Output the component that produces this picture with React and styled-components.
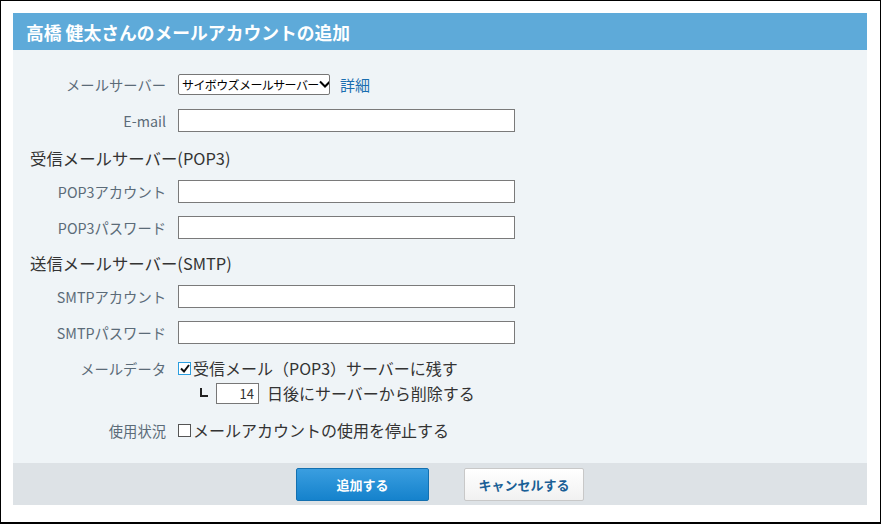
import React from "react";
import styled, { createGlobalStyle } from "styled-components";

const G = createGlobalStyle`
  html,body{margin:0;padding:0;background:#fff;}
  body{font-family:"Noto Sans CJK JP","Noto Sans",sans-serif;}
`;
const Frame = styled.div`
  width:881px;height:524px;box-sizing:border-box;border:1px solid #000;border-bottom-width:2px;
  padding:12px 13px 0 12px;background:#fff;
`;
const Header = styled.div`
  height:37px;background:#5eaad9;color:#fff;font-weight:bold;font-size:17.8px;
  display:flex;align-items:center;padding-left:13px;white-space:nowrap;
`;
const Body = styled.div`
  background:#eff4f7;height:413px;box-sizing:border-box;padding-top:23px;
  display:flex;flex-direction:column;
`;
const Row = styled.div`
  display:flex;align-items:${p=>p.top?"flex-start":"center"};min-height:22px;margin-bottom:${p=>p.mb||13}px;
`;
const Label = styled.div`
  width:153px;text-align:right;color:#5b6b78;font-size:14.3px;padding-right:12px;flex:none;white-space:nowrap;
`;
const Section = styled.div`
  font-size:16.4px;color:#333;padding-left:17px;margin:-2px 0 10px;
`;
const Input = styled.div`
  width:337px;height:23px;box-sizing:border-box;border:1px solid #7a7a7a;background:#fff;
`;
const Select = styled.div`
  width:152px;height:21px;box-sizing:border-box;border:1px solid #767676;background:#fff;border-radius:2px;
  display:flex;align-items:center;justify-content:space-between;padding:0 3px;font-size:12px;color:#000;
  white-space:nowrap;letter-spacing:-0.6px;overflow:hidden;
`;
const Link = styled.span`color:#1a6eb0;font-size:15px;margin-left:10px;`;
const Check = styled.span`
  width:11px;height:11px;border:1px solid ${p=>p.on?"#2a9ee0":"#555"};background:#fff;display:inline-flex;
  align-items:center;justify-content:center;margin-right:2px;flex:none;
`;
const Opt = styled.div`display:flex;align-items:center;font-size:16px;color:#333;white-space:nowrap;`;
const Num = styled.div`
  width:43px;height:21px;box-sizing:border-box;border:1px solid #777;background:#fff;font-size:13px;
  text-align:right;padding-right:4px;line-height:19px;margin:0 8px 0 7px;color:#333;
`;
const Sub = styled.div`display:flex;align-items:center;padding-left:22px;margin-top:1px;font-size:16px;color:#333;white-space:nowrap;`;
const Footer = styled.div`
  height:42px;background:#dde2e6;display:flex;align-items:center;justify-content:center;gap:35px;
`;
const Btn = styled.div`
  height:33px;box-sizing:border-box;border-radius:2px;display:flex;align-items:center;justify-content:center;
  font-size:13px;font-weight:bold;
  ${p=>p.primary?`width:133px;background:linear-gradient(#3a9ee0,#1582cc);color:#fff;border:1px solid #1370b0;`
  :`width:120px;background:linear-gradient(#fff,#f1f1f1);color:#1a5f96;border:1px solid #c8c8c8;`}
`;

export default function App(){
  return (<><G/><Frame>
    <Header>高橋 健太さんのメールアカウントの追加</Header>
    <Body>
      <Row mb={14}><Label>メールサーバー</Label>
        <Select>サイボウズメールサーバー<svg width="12" height="8" viewBox="0 0 12 8" style={{flex:"none"}}><path d="M1 1.5l5 5 5-5" stroke="#000" strokeWidth="2" fill="none"/></svg></Select>
        <Link>詳細</Link></Row>
      <Row mb={16}><Label>E-mail</Label><Input/></Row>
      <Section>受信メールサーバー(POP3)</Section>
      <Row><Label>POP3アカウント</Label><Input/></Row>
      <Row mb={14}><Label>POP3パスワード</Label><Input/></Row>
      <Section>送信メールサーバー(SMTP)</Section>
      <Row><Label>SMTPアカウント</Label><Input/></Row>
      <Row mb={12}><Label>SMTPパスワード</Label><Input/></Row>
      <Row top mb={13}><Label style={{paddingTop:2}}>メールデータ</Label>
        <div>
          <Opt><Check on><svg width="10" height="9" viewBox="0 0 10 9"><path d="M1 4.5l3 3 5-6.5" stroke="#111" strokeWidth="2" fill="none"/></svg></Check>受信メール（POP3）サーバーに残す</Opt>
          <Sub><svg width="9" height="10"><path d="M1 0v8h7" stroke="#222" strokeWidth="2" fill="none"/></svg><Num>14</Num>日後にサーバーから削除する</Sub>
        </div>
      </Row>
      <Row><Label>使用状況</Label><Opt><Check/>メールアカウントの使用を停止する</Opt></Row>
    </Body>
    <Footer><Btn primary>追加する</Btn><Btn>キャンセルする</Btn></Footer>
  </Frame></>);
}
